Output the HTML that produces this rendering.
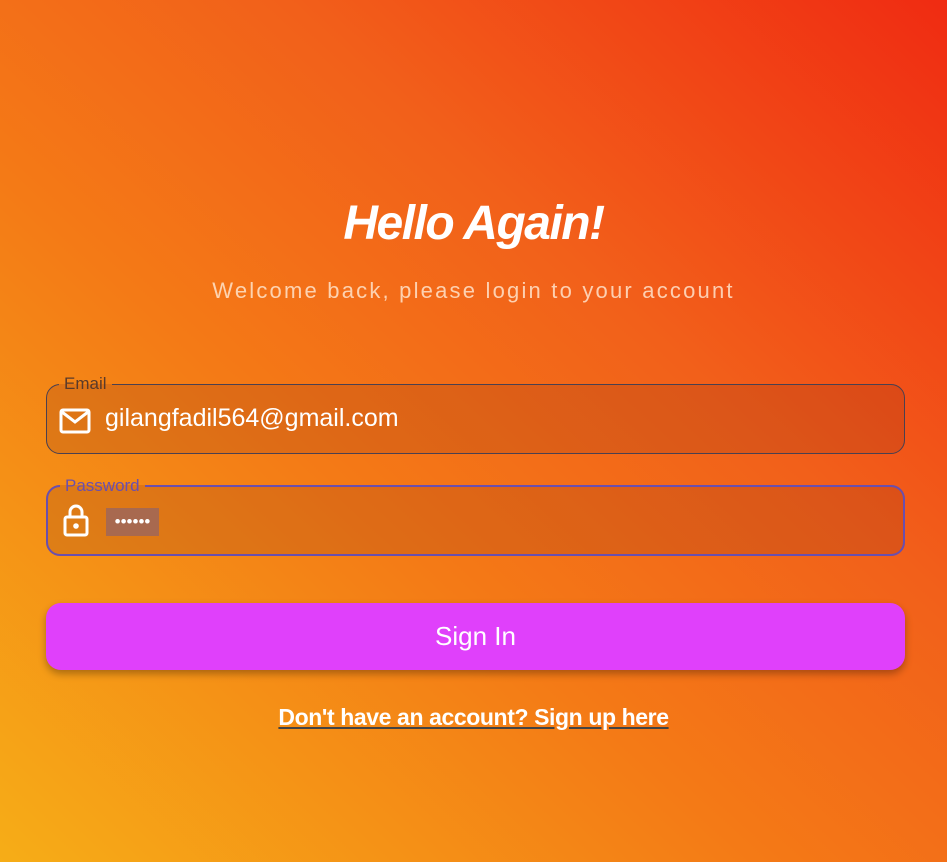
<!DOCTYPE html>
<html><head><style>
*{margin:0;padding:0;box-sizing:border-box}
body{width:947px;height:862px;overflow:hidden;font-family:"Liberation Sans",Roboto,sans-serif;background:linear-gradient(to top right,#f6ad17 0%,#f47a16 40%,#f2601a 65%,#f02b12 100%);position:relative;color:#fff}
.t{position:absolute;left:0;width:947px;text-align:center}
.sub{top:278px;font-size:22px;letter-spacing:2.2px;color:rgba(255,235,215,0.8)}
fieldset{position:absolute;left:46px;width:859px;border-radius:14px;background:rgba(120,40,20,0.18);padding:0 12px}
.f1{top:374px;height:80px;border:1.5px solid #4a4050}
.f2{top:476px;height:80px;border:2.5px solid #6a4fae}
legend{padding:0 5px;font-size:17px;line-height:20px}
.f1 legend{color:#5a3a2a}
.f2 legend{color:#6a4fae}
.val{position:absolute;left:58px;top:10px;font-size:25px}
.ico{position:absolute;left:12px;top:11px}
.pw{position:absolute;left:58px;top:12px;width:53px;height:28px;background:#a8694f;font-size:17px;line-height:28px;letter-spacing:0;color:#fff;text-align:center}
.btn{position:absolute;left:46px;top:603px;width:859px;height:67px;border-radius:15px;background:#e040fb;box-shadow:0 4px 8px rgba(0,0,0,0.3);text-align:center;line-height:67px;font-size:26px}
.link{top:704px;font-size:23px;font-weight:bold;text-decoration:underline;text-decoration-color:#444;letter-spacing:-0.4px}
</style></head><body>
<div class="t" style="top:196px;font-size:48px;font-style:italic;font-weight:bold;letter-spacing:-1.5px">Hello Again!</div>
<div class="t sub">Welcome back, please login to your account</div>
<fieldset class="f1"><legend>Email</legend>
<svg class="ico" width="32" height="32" viewBox="0 0 32 32"><rect x="2" y="5" width="28" height="22" rx="2" fill="none" stroke="#fff" stroke-width="3"/><path d="M3 7 L16 17 L29 7" fill="none" stroke="#fff" stroke-width="3"/></svg>
<span class="val">gilangfadil564@gmail.com</span></fieldset>
<fieldset class="f2"><legend>Password</legend>
<svg class="ico" width="32" height="34" viewBox="0 0 32 34" style="top:7px"><path d="M10 14 V9 a6 6 0 0 1 12 0 V14" fill="none" stroke="#fff" stroke-width="3"/><rect x="5" y="14" width="22" height="18" rx="2" fill="none" stroke="#fff" stroke-width="3"/><circle cx="16" cy="23" r="2.8" fill="#fff"/></svg>
<span class="pw">&bull;&bull;&bull;&bull;&bull;&bull;</span></fieldset>
<div class="btn">Sign In</div>
<div class="t link">Don't have an account? Sign up here</div>
</body></html>
